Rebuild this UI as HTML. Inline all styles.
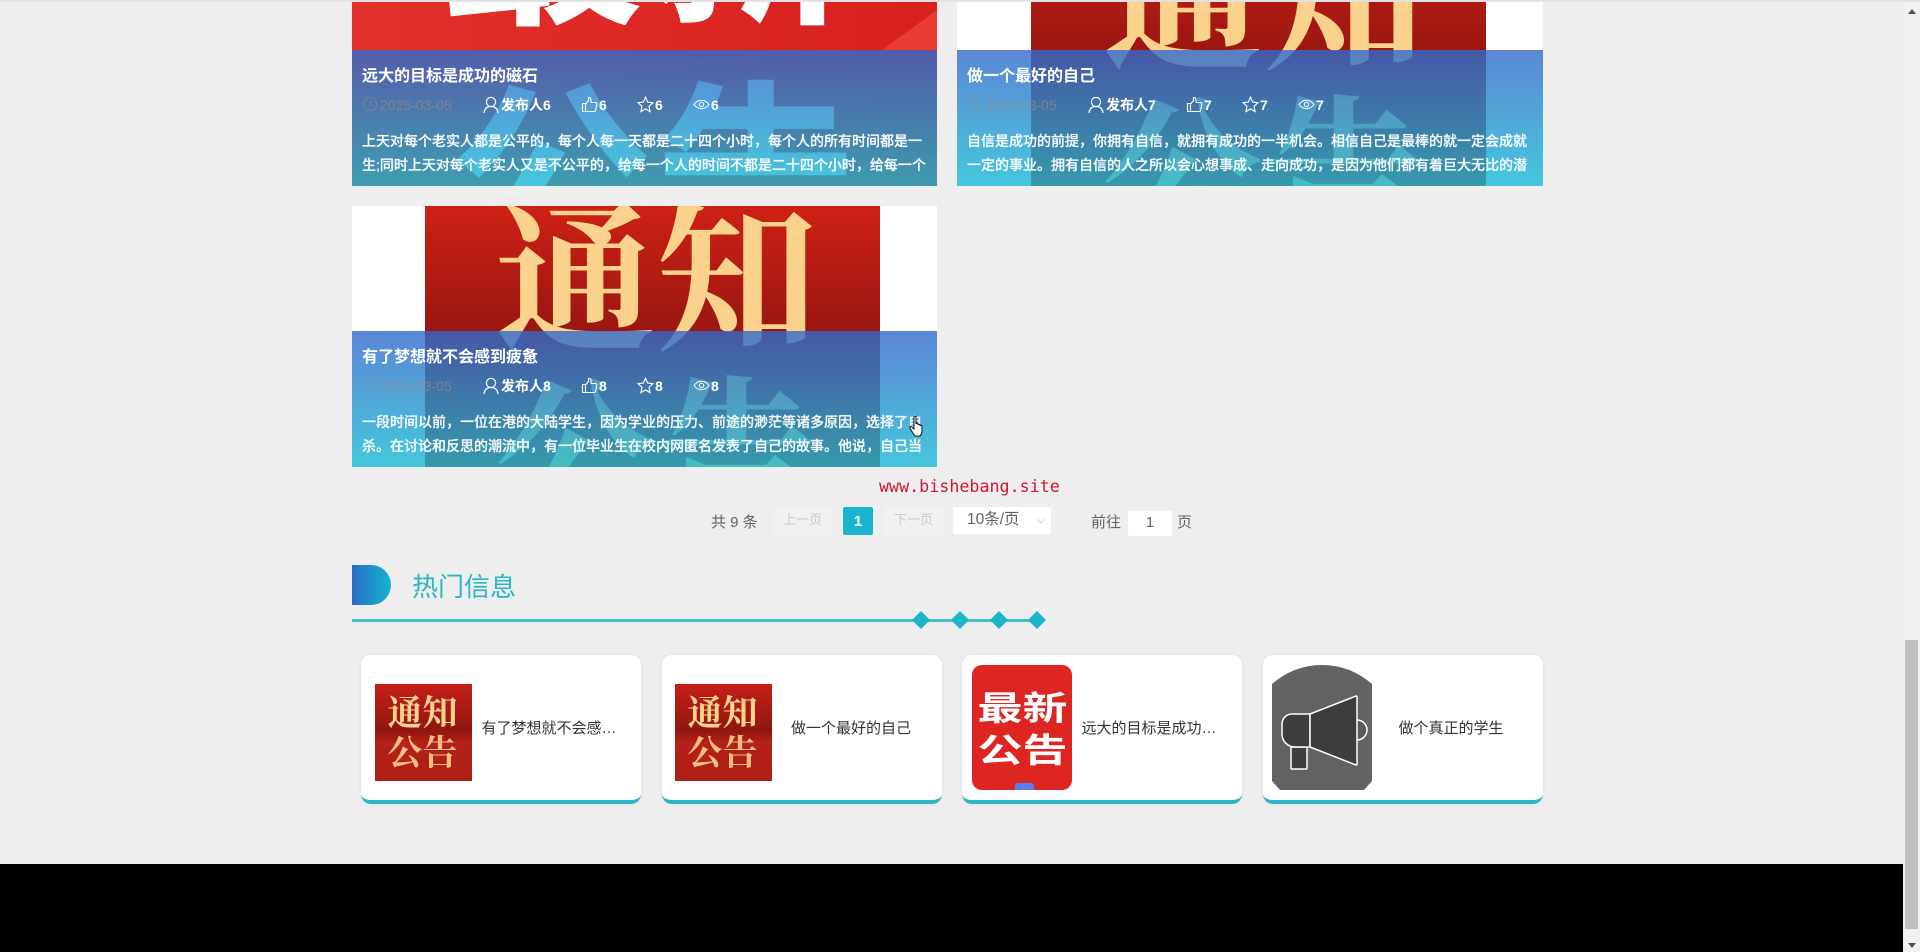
<!DOCTYPE html>
<html lang="zh-CN">
<head>
<meta charset="utf-8">
<title>热门信息</title>
<style>
html,body{margin:0;padding:0;width:1920px;height:952px;overflow:hidden;background:#eeeeee;font-family:"Liberation Sans","Noto Sans CJK SC",sans-serif;}
*{box-sizing:border-box}
.a{position:absolute}
.card{position:absolute;width:585px;height:261px;overflow:hidden;background:#fff}
.card>svg{position:absolute;left:0;top:0}
.ov{position:absolute;left:0;top:125px;width:100%;height:136px;background:linear-gradient(180deg,rgba(50,104,204,.8),rgba(22,185,210,.8));color:#fff}
.ti{position:absolute;left:10px;top:15px;font-size:16px;font-weight:700;line-height:24px;white-space:nowrap}
.r{position:absolute;top:43px;font-size:14px;line-height:24px;font-weight:700;white-space:nowrap;color:#fff}
.d{color:rgba(170,135,125,.62);font-weight:400}
.ic{position:absolute;top:46px}
.tx{position:absolute;left:10px;font-size:14px;line-height:24px;font-weight:500;white-space:nowrap;color:rgba(255,255,255,.95);-webkit-text-stroke:.3px rgba(255,255,255,.7)}
.hot{position:absolute;top:655px;width:280px;height:149px;background:#fff;border-radius:10px;border-bottom:4px solid #2db5c6;box-shadow:0 0 5px rgba(0,0,0,.06)}
.hot .t{position:absolute;left:120px;width:136px;top:63px;line-height:22px;font-size:15px;color:#333;text-align:center;white-space:nowrap}
.hot svg{position:absolute}
.dm{position:absolute;top:611px;width:18px;height:18px;background:#18b6cc;clip-path:polygon(50% 0,100% 50%,50% 100%,0 50%)}
.pg{position:absolute;font-size:14px;color:#606266;line-height:28px;white-space:nowrap}
</style>
</head>
<body>
<!-- card 1 -->
<div class="card" style="left:352px;top:-75px">
<svg width="585" height="261" viewBox="0 0 585 261">
<defs><linearGradient id="rd" x1="0" x2="1" y1="0" y2="0"><stop offset="0" stop-color="#e2302c"/><stop offset="1" stop-color="#d8201d"/></linearGradient></defs>
<rect width="585" height="261" fill="url(#rd)"/>
<polygon points="530,125 585,85 585,125" fill="#ea3a34"/>
<text x="293" y="83" text-anchor="middle" font-size="205" font-weight="700" fill="#fff" font-family="'Noto Sans CJK SC',sans-serif">最新</text>
<text x="301" y="329" text-anchor="middle" font-size="205" font-weight="700" fill="#fff" font-family="'Noto Sans CJK SC',sans-serif">公告</text>
</svg>
<div class="ov">
<div class="ti">远大的目标是成功的磁石</div>
<svg class="ic" style="left:10px" width="16" height="16" viewBox="0 0 16 16" fill="none" stroke="rgba(170,135,125,.6)"><circle cx="8" cy="8" r="6.5"/><path d="M8 4v4l3 2"/></svg>
<div class="r d" style="left:28px">2025-03-05</div>
<svg class="ic" style="left:130px" width="18" height="18" viewBox="0 0 18 18" fill="none" stroke="#fff" stroke-width="1.2"><circle cx="9" cy="6" r="4.6"/><path d="M2 17c.6-4.4 3.2-6.6 7-6.6s6.400 2.200 7 6.600"/></svg>
<div class="r" style="left:149px">发布人6</div>
<svg class="ic" style="left:229px" width="17" height="17" viewBox="0 0 17 17" fill="none" stroke="#fff" stroke-width="1.1"><path d="M1.500 7.500h3v8h-3zM4.500 8l3-3.500V1.500c1.800 0 2.500 1.200 2.500 2.500v2.500h4.500c1 0 1.500.8 1.300 1.700l-1.200 6c-.2.800-.7 1.300-1.500 1.300H4.500"/></svg>
<div class="r" style="left:247px">6</div>
<svg class="ic" style="left:285px" width="17" height="17" viewBox="0 0 17 17" fill="none" stroke="#fff" stroke-width="1.1"><path d="M8.500 1.200l2.200 4.900 5.300.6-4 3.600 1.100 5.300-4.600-2.700-4.600 2.700 1.100-5.300-4-3.600 5.300-.6z"/></svg>
<div class="r" style="left:303px">6</div>
<svg class="ic" style="left:341px" width="17" height="17" viewBox="0 0 17 17" fill="none" stroke="#fff" stroke-width="1"><path d="M1 8.500C3 5.700 5.500 4.300 8.500 4.300s5.500 1.400 7.500 4.200c-2 2.800-4.500 4.200-7.500 4.200S3 11.300 1 8.500z"/><circle cx="8.500" cy="8.500" r="2.200"/></svg>
<div class="r" style="left:359px">6</div>
<div class="tx" style="top:79px">上天对每个老实人都是公平的，每个人每一天都是二十四个小时，每个人的所有时间都是一</div>
<div class="tx" style="top:103px">生;同时上天对每个老实人又是不公平的，给每一个人的时间不都是二十四个小时，给每一个</div>
</div>
</div>
<!-- card 2 -->
<div class="card" style="left:957px;top:-75px;width:586px">
<svg width="586" height="261" viewBox="0 0 586 261">
<defs><linearGradient id="rs" x1="0" x2="0" y1="0" y2="1"><stop offset="0" stop-color="#cd2115"/><stop offset=".5" stop-color="#981610"/><stop offset="1" stop-color="#b41d15"/></linearGradient></defs>
<rect x="74" width="455" height="261" fill="url(#rs)"/>
<text x="306" y="131" text-anchor="middle" font-size="161" font-weight="700" fill="#fbd28c" font-family="'Noto Serif CJK SC',serif">通知</text>
<text x="306" y="306" text-anchor="middle" font-size="161" font-weight="700" fill="#fbd28c" font-family="'Noto Serif CJK SC',serif">公告</text>
</svg>
<div class="ov">
<div class="ti">做一个最好的自己</div>
<svg class="ic" style="left:10px" width="16" height="16" viewBox="0 0 16 16" fill="none" stroke="rgba(170,135,125,.45)"><circle cx="8" cy="8" r="6.5"/><path d="M8 4v4l3 2"/></svg>
<div class="r d" style="left:28px">2025-03-05</div>
<svg class="ic" style="left:130px" width="18" height="18" viewBox="0 0 18 18" fill="none" stroke="#fff" stroke-width="1.2"><circle cx="9" cy="6" r="4.6"/><path d="M2 17c.6-4.400 3.200-6.600 7-6.600s6.400 2.200 7 6.600"/></svg>
<div class="r" style="left:149px">发布人7</div>
<svg class="ic" style="left:229px" width="17" height="17" viewBox="0 0 17 17" fill="none" stroke="#fff" stroke-width="1.1"><path d="M1.500 7.500h3v8h-3zM4.500 8l3-3.500V1.500c1.800 0 2.500 1.200 2.500 2.500v2.500h4.500c1 0 1.500.8 1.300 1.700l-1.200 6c-.2.800-.7 1.300-1.500 1.300H4.500"/></svg>
<div class="r" style="left:247px">7</div>
<svg class="ic" style="left:285px" width="17" height="17" viewBox="0 0 17 17" fill="none" stroke="#fff" stroke-width="1.1"><path d="M8.500 1.200l2.200 4.900 5.300.6-4 3.600 1.100 5.300-4.600-2.700-4.600 2.700 1.100-5.300-4-3.600 5.300-.6z"/></svg>
<div class="r" style="left:303px">7</div>
<svg class="ic" style="left:341px" width="17" height="17" viewBox="0 0 17 17" fill="none" stroke="#fff" stroke-width="1"><path d="M1 8.500C3 5.700 5.500 4.300 8.500 4.300s5.500 1.400 7.500 4.200c-2 2.800-4.500 4.200-7.500 4.200S3 11.300 1 8.500z"/><circle cx="8.500" cy="8.500" r="2.200"/></svg>
<div class="r" style="left:359px">7</div>
<div class="tx" style="top:79px">自信是成功的前提，你拥有自信，就拥有成功的一半机会。相信自己是最棒的就一定会成就</div>
<div class="tx" style="top:103px">一定的事业。拥有自信的人之所以会心想事成、走向成功，是因为他们都有着巨大无比的潜</div>
</div>
</div>
<!-- card 3 -->
<div class="card" style="left:352px;top:206px">
<svg width="585" height="261" viewBox="0 0 585 261">
<defs><linearGradient id="rs2" x1="0" x2="0" y1="0" y2="1"><stop offset="0" stop-color="#cd2115"/><stop offset=".5" stop-color="#981610"/><stop offset="1" stop-color="#b41d15"/></linearGradient></defs>
<rect x="73" width="455" height="261" fill="url(#rs2)"/>
<text x="304" y="131" text-anchor="middle" font-size="161" font-weight="700" fill="#fbd28c" font-family="'Noto Serif CJK SC',serif">通知</text>
<text x="304" y="306" text-anchor="middle" font-size="161" font-weight="700" fill="#fbd28c" font-family="'Noto Serif CJK SC',serif">公告</text>
</svg>
<div class="ov">
<div class="ti">有了梦想就不会感到疲惫</div>
<svg class="ic" style="left:10px" width="16" height="16" viewBox="0 0 16 16" fill="none" stroke="rgba(170,135,125,.4)"><circle cx="8" cy="8" r="6.500"/><path d="M8 4v4l3 2"/></svg>
<div class="r d" style="left:28px">2025-03-05</div>
<svg class="ic" style="left:130px" width="18" height="18" viewBox="0 0 18 18" fill="none" stroke="#fff" stroke-width="1.2"><circle cx="9" cy="6" r="4.600"/><path d="M2 17c.6-4.400 3.200-6.600 7-6.600s6.400 2.200 7 6.600"/></svg>
<div class="r" style="left:149px">发布人8</div>
<svg class="ic" style="left:229px" width="17" height="17" viewBox="0 0 17 17" fill="none" stroke="#fff" stroke-width="1.1"><path d="M1.500 7.500h3v8h-3zM4.500 8l3-3.500V1.500c1.800 0 2.500 1.200 2.500 2.500v2.500h4.500c1 0 1.500.8 1.300 1.700l-1.200 6c-.2.800-.7 1.300-1.500 1.300H4.500"/></svg>
<div class="r" style="left:247px">8</div>
<svg class="ic" style="left:285px" width="17" height="17" viewBox="0 0 17 17" fill="none" stroke="#fff" stroke-width="1.1"><path d="M8.500 1.200l2.200 4.900 5.300.6-4 3.600 1.100 5.300-4.600-2.700-4.600 2.700 1.100-5.300-4-3.600 5.300-.6z"/></svg>
<div class="r" style="left:303px">8</div>
<svg class="ic" style="left:341px" width="17" height="17" viewBox="0 0 17 17" fill="none" stroke="#fff" stroke-width="1"><path d="M1 8.500C3 5.700 5.500 4.300 8.500 4.300s5.500 1.400 7.500 4.200c-2 2.800-4.500 4.200-7.500 4.200S3 11.300 1 8.500z"/><circle cx="8.500" cy="8.500" r="2.200"/></svg>
<div class="r" style="left:359px">8</div>
<div class="tx" style="top:79px">一段时间以前，一位在港的大陆学生，因为学业的压力、前途的渺茫等诸多原因，选择了自</div>
<div class="tx" style="top:103px">杀。在讨论和反思的潮流中，有一位毕业生在校内网匿名发表了自己的故事。他说，自己当</div>
</div>
</div>
<!-- cursor -->
<svg class="a" style="left:909px;top:415px" width="17" height="22" viewBox="0 0 17 22"><path d="M5 2c0-1.300 2-1.300 2 0v7c0-1 2-1 2 0v1c0-1 2-1 2 0v1c0-1 2-1 2 0v4c0 3-1 5-2 6H6c-1-1-2-3-4-6l-1-2c-.6-1.200 1-2 2-1l2 2z" fill="#fff" stroke="#111" stroke-width="1"/></svg>
<!-- watermark -->
<div class="a" style="left:879px;top:475px;font-family:'DejaVu Sans Mono','Liberation Mono',monospace;font-size:16.7px;line-height:22px;color:#d5152e;white-space:nowrap">www.bishebang.site</div>
<!-- pagination -->
<div class="pg" style="left:711px;top:509px;font-size:15px">共 9 条</div>
<div class="a" style="left:773px;top:507px;width:59px;height:28px;background:#f1f1f2;border-radius:2px;font-size:13px;line-height:26px;text-align:center;color:#c6c9ce">上一页</div>
<div class="a" style="left:843px;top:507px;width:30px;height:28px;background:#1ab5cc;border-radius:2px;font-size:15px;font-weight:700;line-height:30px;text-align:center;color:#f4ffff">1</div>
<div class="a" style="left:883px;top:507px;width:61px;height:28px;background:#f1f1f2;border-radius:2px;font-size:13px;line-height:26px;text-align:center;color:#c6c9ce">下一页</div>
<div class="a" style="left:953px;top:507px;width:98px;height:27px;background:#fff;border-radius:2px;font-size:15.5px;line-height:26px;padding-left:14px;color:#606266">10条/页</div>
<svg class="a" style="left:1036px;top:517px" width="10" height="8" viewBox="0 0 10 8" fill="none" stroke="#d8dade" stroke-width="1.200"><path d="M1 2l4 4 4-4"/></svg>
<div class="pg" style="left:1091px;top:509px;font-size:15px">前往</div>
<div class="a" style="left:1128px;top:511px;width:44px;height:25px;background:#fff;border-radius:2px;font-size:15px;line-height:24px;text-align:center;color:#606266">1</div>
<div class="pg" style="left:1177px;top:509px;font-size:15px">页</div>
<!-- heading -->
<div class="a" style="left:352px;top:565px;width:39px;height:40px;border-radius:0 20px 20px 0;background:linear-gradient(90deg,#2b6cc4,#14b4d0)"></div>
<div class="a" style="left:412px;top:569px;font-size:26px;line-height:36px;color:#2bb6c6;white-space:nowrap">热门信息</div>
<div class="a" style="left:352px;top:619px;width:686px;height:3px;background:#42c1ca"></div>
<div class="dm" style="left:912px"></div>
<div class="dm" style="left:951px"></div>
<div class="dm" style="left:990px"></div>
<div class="dm" style="left:1028px"></div>
<!-- hot 1 -->
<div class="hot" style="left:361px">
<svg style="left:14px;top:29px" width="97" height="97" viewBox="0 0 97 97">
<defs><linearGradient id="t1" x1="0" x2="0" y1="0" y2="1"><stop offset="0" stop-color="#c61f18"/><stop offset=".48" stop-color="#8f1710"/><stop offset=".6" stop-color="#b4201a"/><stop offset="1" stop-color="#ad1f16"/></linearGradient></defs>
<rect width="97" height="97" fill="url(#t1)"/>
<text x="47.500" y="41" text-anchor="middle" font-size="35" font-weight="700" fill="#fbd38f" font-family="'Noto Serif CJK SC',serif">通知</text>
<text x="47.500" y="81" text-anchor="middle" font-size="35" font-weight="700" fill="#f6bd85" font-family="'Noto Serif CJK SC',serif">公告</text>
</svg>
<div class="t">有了梦想就不会感…</div>
</div>
<!-- hot 2 -->
<div class="hot" style="left:662px">
<svg style="left:13px;top:29px" width="97" height="97" viewBox="0 0 97 97">
<rect width="97" height="97" fill="url(#t1)"/>
<text x="47.500" y="41" text-anchor="middle" font-size="35" font-weight="700" fill="#fbd38f" font-family="'Noto Serif CJK SC',serif">通知</text>
<text x="47.500" y="81" text-anchor="middle" font-size="35" font-weight="700" fill="#f6bd85" font-family="'Noto Serif CJK SC',serif">公告</text>
</svg>
<div class="t" style="left:121px">做一个最好的自己</div>
</div>
<!-- hot 3 -->
<div class="hot" style="left:962px">
<svg style="left:10px;top:10px" width="100" height="125" viewBox="0 0 100 125">
<rect width="100" height="125" rx="10" fill="#dd2522"/>
<path d="M43 125v-4a3 3 0 0 1 3-3h13a3 3 0 0 1 3 3v4z" fill="#5a7cf0"/>
<text transform="translate(50.500 55) scale(1 .74)" text-anchor="middle" font-size="45" font-weight="700" fill="#fff" font-family="'Noto Sans CJK SC',sans-serif">最新</text>
<text transform="translate(50.500 97) scale(1 .74)" text-anchor="middle" font-size="45" font-weight="700" fill="#fff" font-family="'Noto Sans CJK SC',sans-serif">公告</text>
</svg>
<div class="t" style="left:119px">远大的目标是成功…</div>
</div>
<!-- hot 4 -->
<div class="hot" style="left:1263px">
<svg style="left:9px;top:10px" width="101" height="125" viewBox="0 0 101 125">
<path d="M0 19Q22 0 50 0Q78 0 100 19V116L92 125H8L0 116Z" fill="#626262"/>
<path d="M85 55a10 10 0 0 1 0 20" fill="#5a5a5a" stroke="#fff" stroke-width="1.500"/>
<path d="M19 82h16v21a1 1 0 0 1-1 1H20a1 1 0 0 1-1-1z" fill="#3d3d3d" stroke="#fff" stroke-width="1.500"/>
<path d="M38 49H20a10 10 0 0 0-10 10v10a13 13 0 0 0 13 13H38z" fill="#3d3d3d" stroke="#fff" stroke-width="1.500"/>
<path d="M38 49L84 31a1 1 0 0 1 1 1V99a1 1 0 0 1-1 1L38 82z" fill="#3d3d3d" stroke="#fff" stroke-width="1.500"/>
</svg>
<div class="t">做个真正的学生</div>
</div>
<!-- footer -->
<div class="a" style="left:0;top:864px;width:1903px;height:88px;background:#000"></div>
<!-- top line -->
<div class="a" style="left:0;top:0;width:1920px;height:2px;background:#e2e2e2"></div>
<!-- scrollbar -->
<div class="a" style="left:1904px;top:2px;width:16px;height:950px;background:#f1f1f1"></div>
<div class="a" style="left:1905px;top:640px;width:13px;height:289px;background:#bfbfbf"></div>
<div class="a" style="left:1908px;top:9px;width:0;height:0;border-left:4px solid transparent;border-right:4px solid transparent;border-bottom:5px solid #505050"></div>
<div class="a" style="left:1908px;top:943px;width:0;height:0;border-left:4px solid transparent;border-right:4px solid transparent;border-top:5px solid #505050"></div>
</body>
</html>
